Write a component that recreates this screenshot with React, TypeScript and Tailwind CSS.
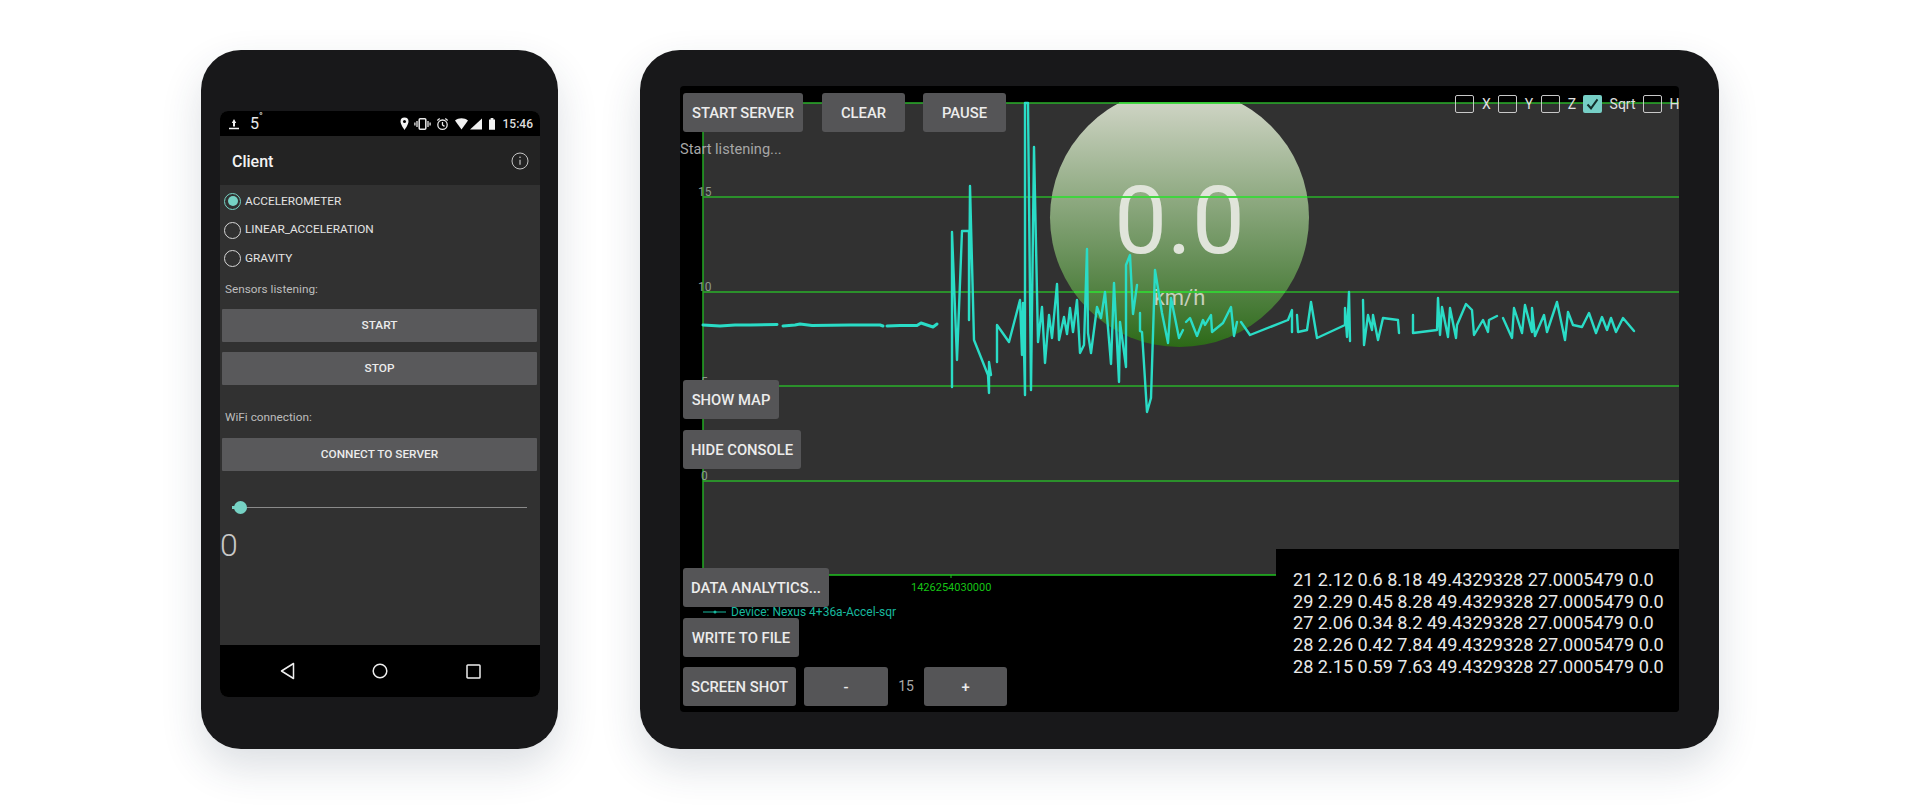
const seriesParts = [
  "703,325 720,326 735,325 750,325 777,324.5",
  "783,326 795,325 800,324 812,325.5 850,325 880,325 883,326",
  "887,326 900,325.5 917,325.5 921,323 930,326 933,327 937,324",
];

const spikes = [
  "952,387 952,232 957,360 962,231 969,231 969,320 970,186 974,340 988,375 989,393 989,362 991,375",
  "997,362 997,325 1009,342 1020,300 1022,355 1023,303 1025,395 1025,103 1028,103 1031,390 1034,147 1038,342 1042,307 1045,363 1049,315 1052,338 1057,284 1059,340 1064,317 1067,334 1070,308 1073,332 1077,300 1080,353 1084,345 1087,249 1088,333 1091,353 1097,307 1101,318 1105,292 1111,364 1114,283 1119,382 1120,322 1126,367 1126,265 1130,255 1133,314 1137,285",
  "1140,313 1140,331 1142,332 1147,412 1151,398 1155,270 1162,313 1168,343 1171,298 1179,338 1183,330",
  "1186,322 1190,318 1197,336 1203,320 1205,325 1211,315 1212,332 1223,323 1231,307 1234,336 1237,322",
  "1241,322 1250,335 1288,320 1292,310 1292,332",
  "1297,315 1298,332 1307,330 1311,302 1317,338 1345,325 1345,308 1347,337 1349,292 1350,341",
  "1363,300 1364,345 1368,315 1372,330 1373,315 1378,340 1383,318 1398,320 1399,333",
  "1413,315 1413,333 1437,330 1438,298 1440,335 1442,307 1448,337 1450,308 1456,338 1457,325 1466,304 1472,310 1474,335 1483,320 1488,332 1489,320 1497,316",
  "1503,318 1512,338 1514,308 1522,333 1525,305 1532,332 1532,308 1535,336 1544,315 1547,332 1557,302 1565,340 1568,312 1573,325 1582,327 1589,313 1596,333 1602,317 1607,330 1611,318 1616,332 1623,318 1634,331",
];

const gridLines = [103, 197, 292, 386, 481];

const consoleLines = [
  "21 2.12 0.6 8.18 49.4329328 27.0005479 0.0",
  "29 2.29 0.45 8.28 49.4329328 27.0005479 0.0",
  "27 2.06 0.34 8.2 49.4329328 27.0005479 0.0",
  "28 2.26 0.42 7.84 49.4329328 27.0005479 0.0",
  "28 2.15 0.59 7.63 49.4329328 27.0005479 0.0",
];

function StatusIcons() {
  return (
    <svg width="103" height="16" viewBox="0 0 103 16" className="shrink-0">
      {/* pin */}
      <path d="M4.500 1.500a4 4 0 0 0-4 4c0 3 4 8.500 4 8.500s4-5.500 4-8.500a4 4 0 0 0-4-4z" fill="#f2f2f2" />
      <circle cx="4.500" cy="5.500" r="1.500" fill="#000" />
      {/* vibrate */}
      <rect x="19.200" y="2.700" width="6.600" height="10.600" rx="1" fill="none" stroke="#e8e8e8" strokeWidth="1.500" />
      <path d="M17 5v6M28 5v6M14.900 6.500v3M30.100 6.500v3" stroke="#e8e8e8" strokeWidth="1.300" />
      {/* alarm */}
      <circle cx="42.500" cy="8.700" r="4.700" fill="none" stroke="#e8e8e8" strokeWidth="1.300" />
      <path d="M42.500 6v3l2 1.400M37.300 4.600l2.400-2M47.700 4.600l-2.400-2" fill="none" stroke="#e8e8e8" strokeWidth="1.300" />
      {/* wifi */}
      <path d="M55 4.600c3.600-3 9.400-3 13 0L61.500 13.400z" fill="#f2f2f2" />
      {/* signal */}
      <path d="M82 2.600v11H70z" fill="#f2f2f2" />
      {/* battery */}
      <path d="M89 3.500h1.600V2h2.800v1.500H95v10.200h-6z" fill="#f2f2f2" />
    </svg>
  );
}

function PhoneButton({ label, className }: { label: string; className: string }) {
  return (
    <div className={`w-[315px] h-[33px] ml-[2px] flex items-center justify-center rounded-[1px] bg-[#59595b] text-[11.800px] font-medium text-[#ececec] ${className}`}>
      {label}
    </div>
  );
}

function Radio({ label, checked }: { label: string; checked?: boolean }) {
  return (
    <div className="h-[28.700px] flex items-center gap-[4px] pl-[4px] text-[11.800px] text-[#e4e4e4]">
      <span
        className={`w-[17px] h-[17px] rounded-full border-[1.500px] flex items-center justify-center ${
          checked ? "border-[#76d2c4]" : "border-[#d6d6d6]"
        }`}
      >
        {checked && <span className="w-[10px] h-[10px] rounded-full bg-[#76d2c4]" />}
      </span>
      {label}
    </div>
  );
}

function Phone() {
  return (
    <div className="w-[357px] h-[699px] shrink-0 rounded-[40px] bg-[#18181a] pt-[61px] pl-[19px] shadow-[0_18px_40px_rgba(40,55,80,0.16)]">
      <div className="w-[320px] h-[586px] flex flex-col overflow-hidden rounded-[8px] bg-[#313131]">
        <div className="h-[25px] flex items-center bg-black pl-[9px] pr-[7px] text-white">
          <svg width="10" height="12" viewBox="0 0 10 12" className="shrink-0">
            <path d="M5 1L7.200 5H6v3.600H4V5H2.800z" fill="#f4f4f4" />
            <path d="M0 10.500h10" stroke="#f4f4f4" strokeWidth="1.300" />
          </svg>
          <span className="relative ml-[11px] text-[16px] leading-none text-[#e8e8e8]">
            5<span className="absolute left-[9px] top-[-4px] text-[10px] leading-none">°</span>
          </span>
          <span className="ml-auto flex"><StatusIcons /></span>
          <span className="text-[12px] font-medium text-[#dedede]">15:46</span>
        </div>
        <div className="h-[49px] flex items-center justify-between bg-[#232323] pl-[12px] pr-[11px]">
          <span className="mt-[2px] text-[16px] font-medium text-[#f2f2f2]">Client</span>
          <svg width="18" height="18" viewBox="0 0 18 18">
            <circle cx="9" cy="9" r="8" fill="none" stroke="#c4c4c4" strokeWidth="1" />
            <path d="M9 7.800v5" stroke="#c4c4c4" strokeWidth="1.200" />
            <circle cx="9" cy="5.300" r="0.800" fill="#c4c4c4" />
          </svg>
        </div>
        <div className="flex-1 flex flex-col pt-[2px]">
          <Radio label="ACCELEROMETER" checked />
          <Radio label="LINEAR_ACCELERATION" />
          <Radio label="GRAVITY" />
          <div className="mt-[8px] h-[16px] pl-[5px] text-[11.800px] leading-[16px] text-[#bdbdbd]">Sensors listening:</div>
          <PhoneButton label="START" className="mt-[12px]" />
          <PhoneButton label="STOP" className="mt-[10px]" />
          <div className="mt-[24px] h-[16px] pl-[5px] text-[11.800px] leading-[16px] text-[#bdbdbd]">WiFi connection:</div>
          <PhoneButton label="CONNECT TO SERVER" className="mt-[13px]" />
          <div className="relative mt-[30px] ml-[12px] w-[295px] h-[13px] flex items-center">
            <div className="w-full h-[1px] bg-[#8a8a8a]" />
            <div className="absolute left-0 top-[5px] w-[8px] h-[3px] bg-[#76d2c4]" />
            <div className="absolute left-[2px] top-0 w-[13px] h-[13px] rounded-full bg-[#76d2c4]" />
          </div>
          <div className="mt-[12px] text-[32px] leading-[38px] font-light text-[#c8c8c8]">0</div>
        </div>
        <div className="h-[52px] flex items-center justify-center bg-black">
          <div className="w-[93px] flex justify-center">
            <svg width="15" height="18" viewBox="0 0 15 18">
              <path d="M13.500 1.500v15L1.500 9z" fill="none" stroke="#eeeeee" strokeWidth="1.500" strokeLinejoin="round" />
            </svg>
          </div>
          <div className="w-[93px] flex justify-center">
            <svg width="16" height="16" viewBox="0 0 16 16">
              <circle cx="8" cy="8" r="6.800" fill="none" stroke="#eeeeee" strokeWidth="1.500" />
            </svg>
          </div>
          <div className="w-[93px] flex justify-center">
            <svg width="15" height="15" viewBox="0 0 15 15">
              <rect x="1" y="1" width="13" height="13" rx="0.800" fill="none" stroke="#eeeeee" strokeWidth="1.500" />
            </svg>
          </div>
        </div>
      </div>
    </div>
  );
}

function TabletButton({ label, className }: { label: string; className: string }) {
  return (
    <div className={`h-[39px] shrink-0 pt-[1px] flex items-center justify-center rounded-[3px] bg-[#555557] text-[14.800px] font-medium whitespace-nowrap text-[#ececec] ${className}`}>
      {label}
    </div>
  );
}

function Check({ label, checked, className }: { label: string; checked?: boolean; className?: string }) {
  return (
    <div className={`flex items-center gap-[8px] text-[14px] text-[#e0e0e0] ${className ?? ""}`}>
      <span
        className={`w-[19px] h-[18px] rounded-[2px] flex items-center justify-center ${
          checked ? "bg-[#76cfc6]" : "border-[1.500px] border-[#c8c8c8]"
        }`}
      >
        {checked && (
          <svg width="13" height="12" viewBox="0 0 13 12">
            <path d="M1.500 6.500l3.500 3.800 6.500-9" fill="none" stroke="#14302c" strokeWidth="2" />
          </svg>
        )}
      </span>
      {label}
    </div>
  );
}

function Chart() {
  return (
    <svg viewBox="680 86 999 626" width="999" height="626" className="absolute inset-0">
      {gridLines.map((y) => (
        <line key={y} x1="703" x2="1679" y1={y} y2={y} stroke="#2ab02a" strokeWidth="1.500" />
      ))}
      <line x1="1119" x2="1240" y1="103" y2="103" stroke="#40e040" strokeWidth="1.500" />
      <line x1="1052" x2="1307" y1="197" y2="197" stroke="#40e040" strokeWidth="1.500" />
      <line x1="1074" x2="1285" y1="292" y2="292" stroke="#38d838" strokeWidth="1.500" />
      <line x1="703" x2="1276" y1="575" y2="575" stroke="#1fc01f" strokeWidth="1.500" />
      <line x1="703" x2="703" y1="103" y2="575" stroke="#22a822" strokeWidth="1.500" />
      <line x1="951" x2="951" y1="575" y2="578" stroke="#1fc01f" strokeWidth="1" />
      <g fontSize="12" fill="#8d9a8d" fontFamily="Roboto, sans-serif">
        <text x="698" y="196">15</text>
        <text x="698" y="291">10</text>
        <text x="701" y="386">5</text>
        <text x="701" y="480">0</text>
      </g>
      <text x="911" y="591" fontSize="11" fill="#16c416" fontFamily="Roboto, sans-serif">1426254030000</text>
      <line x1="703" x2="726" y1="612" y2="612" stroke="#17b89e" strokeWidth="1" />
      <circle cx="715" cy="612" r="1.500" fill="#17b89e" />
      <text x="731" y="616" fontSize="12" fill="#17b89e" fontFamily="Roboto, sans-serif">Device: Nexus 4+36a-Accel-sqr</text>
      <g fill="none" stroke="#2adcc6" strokeLinejoin="round" strokeLinecap="round">
        {seriesParts.map((points) => (
          <polyline key={points} points={points} strokeWidth="3" />
        ))}
        {spikes.map((points) => (
          <polyline key={points} points={points} strokeWidth="2.400" />
        ))}
      </g>
    </svg>
  );
}

function Tablet() {
  return (
    <div className="w-[1079px] h-[699px] shrink-0 rounded-[40px] bg-[#18181a] pt-[36px] pl-[40px] shadow-[0_18px_40px_rgba(40,55,80,0.16)]">
      <div className="relative w-[999px] h-[626px] overflow-hidden rounded-[4px] bg-black">
        {/* plot area, with the speed gauge behind the chart lines */}
        <div className="absolute left-[23px] top-[17px] right-0 h-[472px] overflow-hidden bg-[#313131]">
          <div className="absolute left-[347px] top-[-15px] w-[259px] h-[259px] rounded-full bg-linear-to-b from-[#d8dace] to-[#2c6a16]">
            <div className="absolute left-0 top-[76px] w-full text-center text-[94px] leading-[114px] font-normal text-[#e0e4da]">0.0</div>
            <div className="absolute left-0 top-[194px] w-full text-center text-[22px] leading-[32px] text-[#c8d0bc]">km/h</div>
          </div>
        </div>
        <Chart />
        <div className="absolute right-0 bottom-0 w-[403px] h-[163px] bg-black pt-[20px] pl-[17px] text-[18.100px] leading-[21.700px] whitespace-nowrap text-[#e8e8e8]">
          {consoleLines.map((line) => (
            <div key={line}>{line}</div>
          ))}
        </div>
        <div className="relative flex flex-col pt-[7px] pl-[3px]">
          <div className="flex whitespace-nowrap">
            <TabletButton label="START SERVER" className="w-[120px]" />
            <TabletButton label="CLEAR" className="w-[83px] ml-[19px]" />
            <TabletButton label="PAUSE" className="w-[83px] ml-[18px]" />
            <div className="flex ml-[449px] mt-[2px] h-[18px]">
              <Check label="X" />
              <Check label="Y" className="ml-[7px]" />
              <Check label="Z" className="ml-[7.500px]" />
              <Check label="Sqrt" className="ml-[6.500px]" checked />
              <Check label="H" className="ml-[7px]" />
            </div>
          </div>
          <div className="ml-[-3px] mt-[8px] h-[18px] text-[14.600px] leading-[18px] text-[#a6a6a6]">Start listening...</div>
          <TabletButton label="SHOW MAP" className="w-[96px] mt-[222px]" />
          <TabletButton label="HIDE CONSOLE" className="w-[118px] mt-[11px]" />
          <TabletButton label="DATA ANALYTICS..." className="w-[146px] mt-[99px]" />
          <TabletButton label="WRITE TO FILE" className="w-[116px] mt-[11px]" />
          <div className="flex items-center mt-[10px]">
            <TabletButton label="SCREEN SHOT" className="w-[113px]" />
            <TabletButton label="-" className="w-[84px] ml-[8px]" />
            <span className="w-[36px] text-center text-[14px] text-[#a8a8a8]">15</span>
            <TabletButton label="+" className="w-[83px]" />
          </div>
        </div>
      </div>
    </div>
  );
}

export default function App() {
  return (
    <div className="w-[1920px] h-[807px] overflow-hidden bg-white pt-[50px] pl-[201px] font-['Roboto','Liberation_Sans',sans-serif]">
      <div className="flex gap-[82px]">
        <Phone />
        <Tablet />
      </div>
    </div>
  );
}
